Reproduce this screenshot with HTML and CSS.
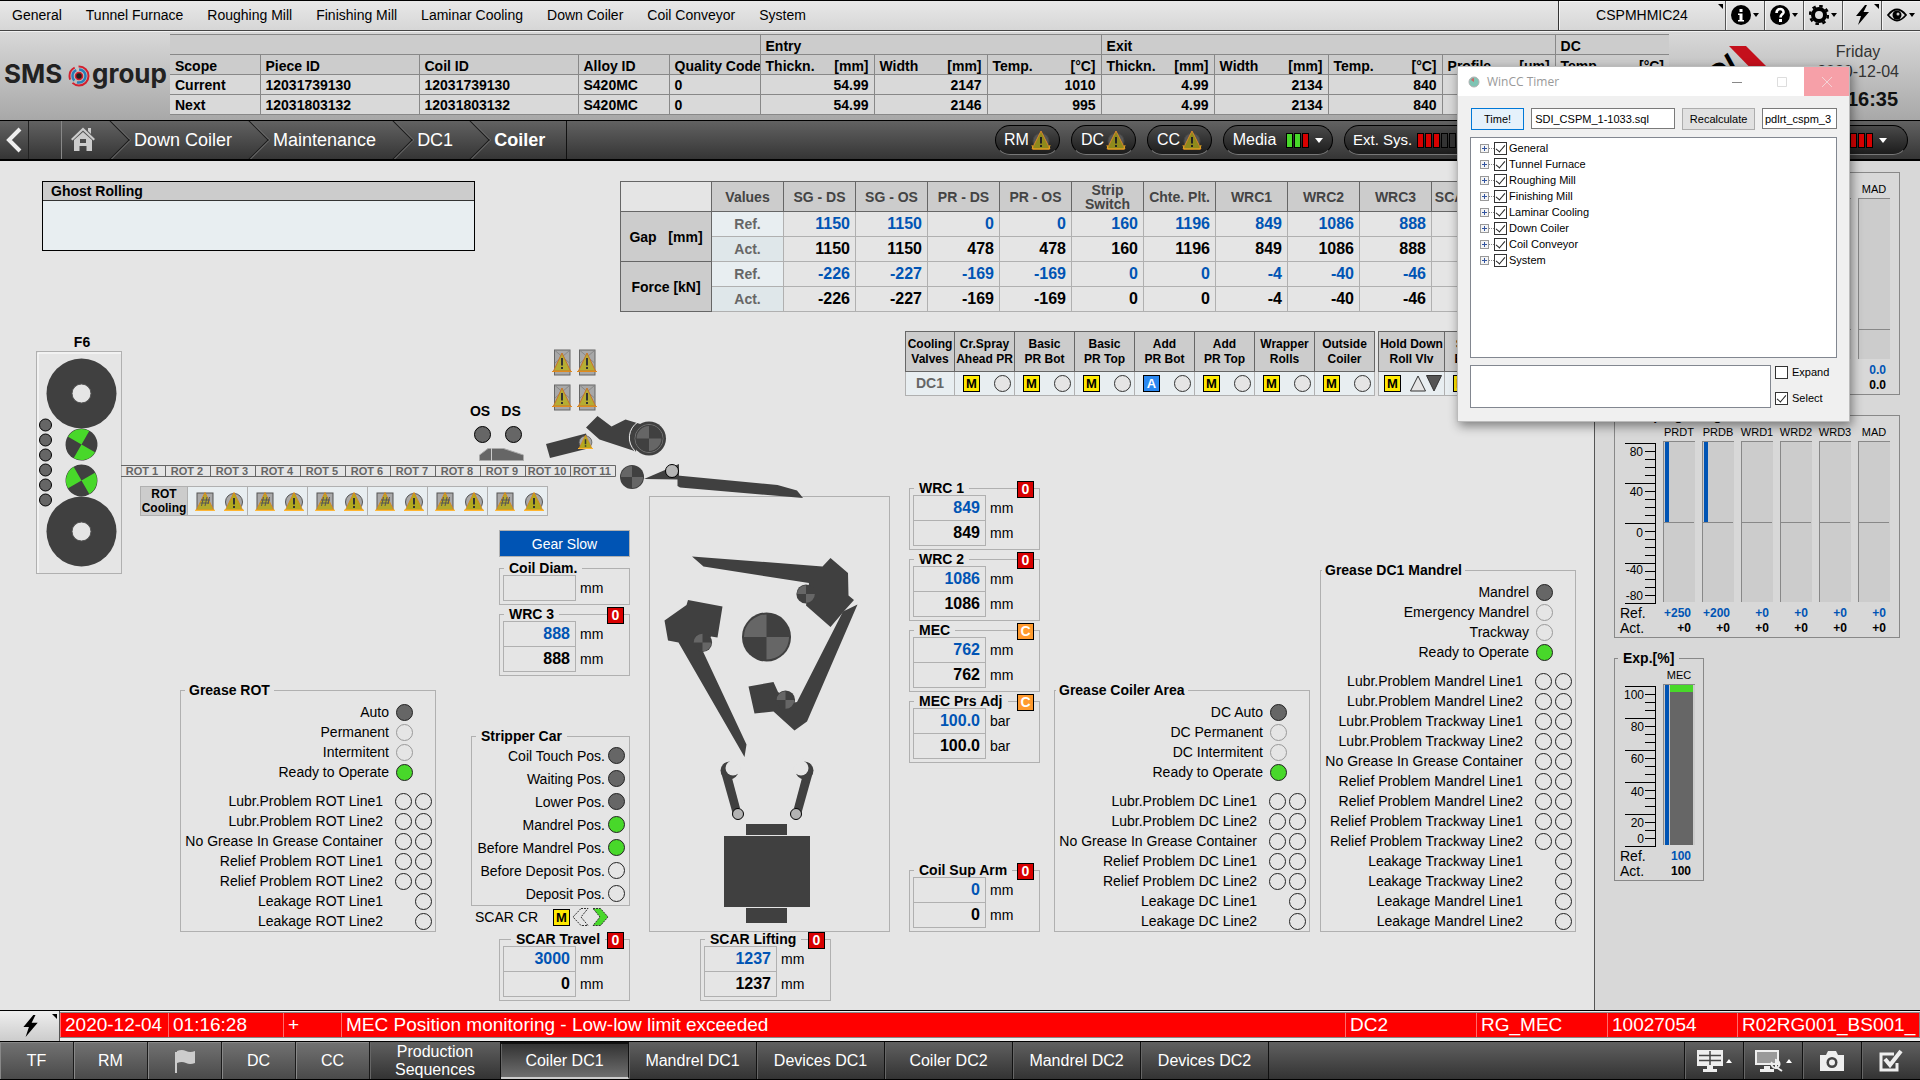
FILE: index.html
```html
<!DOCTYPE html>
<html lang="en">
<head>
<meta charset="utf-8">
<title>Coiler DC1</title>
<link rel="stylesheet" href="styles.css">
</head>
<body>
<svg class="defs" aria-hidden="true">
  <symbol id="roll" viewBox="-13 -13 26 26"><circle r="12.500" fill="#404040"/><path d="M0 0V-11.500A11.500 11.500 0 0 0 -11.500 0ZM0 0V11.500A11.500 11.500 0 0 0 11.500 0Z" fill="#666"/></symbol>
  <symbol id="roll-run" viewBox="-16.500 -16.500 33 33"><circle r="16" fill="#404040"/><path d="M0 0V-15.500A15.500 15.500 0 0 0 -15.500 0ZM0 0V15.500A15.500 15.500 0 0 0 15.500 0Z" fill="#48d82a"/></symbol>
  <symbol id="warn-circle" viewBox="0 0 20 20"><circle cx="10" cy="11" r="8.500" fill="#a8a8a8" stroke="#555"/><path d="M10 1.500L18.500 19H1.500Z" fill="#b2a91f" stroke="#d88a1e"/><path d="M0 19.300H20" stroke="#ffb52e" stroke-width="1.400"/><path d="M10 7V13.500M10 15V17" stroke="#333" stroke-width="2"/></symbol>
  <symbol id="warn-dark" viewBox="0 0 20 20"><circle cx="10" cy="11" r="8" fill="#555" stroke="#444"/><path d="M10 1L19 19H1Z" fill="#8f8a1c" stroke="#d8862a"/><path d="M1 15L2 19H18L19 15" fill="none" stroke="#e8a81e"/><path d="M10 7V13.500M10 15V17" stroke="#222" stroke-width="2"/></symbol>
  <symbol id="warn-square" viewBox="0 0 20 20"><rect x="2" y="2" width="16" height="16.500" fill="#aaa" stroke="#555"/><path d="M10 1.500L18.500 19H1.500Z" fill="#b2a91f" fill-opacity=".9" stroke="#d88a1e"/><path d="M0 19.300H20" stroke="#ffb52e" stroke-width="1.200"/><path d="M8.500 6L6.500 15M12 6L10 15M14.500 6L13 13M6 9H15M5.500 12H14" stroke="#555"/></symbol>
  <symbol id="crate" viewBox="0 0 20 27"><rect x="2.500" y="1" width="15.500" height="25" fill="#a8a8a8" stroke="#666"/><path d="M3 1.500L17.500 14M17.500 1.500L3 14" stroke="#888"/><path d="M10 4L18.500 22H1.500Z" fill="#b5ad33" stroke="#c8742a"/><path d="M0 22.500H20" stroke="#e08a1e"/><path d="M10 9V16.500M10 18V20" stroke="#333" stroke-width="2"/></symbol>
  <symbol id="bolt" viewBox="0 0 16 20"><path d="M11 0L2 11H7L4 20L15 7H9.500L13 0Z" fill="#000"/></symbol>
</svg>

<nav class="menubar">
  <ul class="menu">
    <li><a href="#general">General</a></li>
    <li><a href="#furnace">Tunnel Furnace</a></li>
    <li><a href="#roughing">Roughing Mill</a></li>
    <li><a href="#finishing">Finishing Mill</a></li>
    <li><a href="#laminar">Laminar Cooling</a></li>
    <li><a href="#coiler">Down Coiler</a></li>
    <li><a href="#conveyor">Coil Conveyor</a></li>
    <li><a href="#system">System</a></li>
  </ul>
  <button class="station corner">CSPMHMIC24</button>
  <button class="tool caret" aria-label="Info"><svg width="20" height="20"><circle cx="10" cy="10" r="10"/><path d="M7 8.500H11.500V15H13V16.500H7V15H8.500V10H7ZM8.500 4H11.500V7H8.500Z" fill="#fff"/></svg></button>
  <button class="tool caret" aria-label="Help"><svg width="20" height="20"><circle cx="10" cy="10" r="10"/><path d="M6.500 8C6.500 2.500 14 3 13.500 7.500C13 9.500 10.500 9.500 10.500 12.500" fill="none" stroke="#fff" stroke-width="2.600"/><path d="M9 14H12V17H9Z" fill="#fff"/></svg></button>
  <button class="tool caret" aria-label="Settings"><svg width="20" height="20"><circle cx="10" cy="10" r="6" fill="none" stroke="#000" stroke-width="4"/><circle cx="10" cy="10" r="9" fill="none" stroke="#000" stroke-width="2.500" stroke-dasharray="3.500 3.560"/></svg></button>
  <button class="tool corner" aria-label="Alarms"><svg width="16" height="20"><use href="#bolt"/></svg></button>
  <button class="tool caret" aria-label="View"><svg width="20" height="16"><path d="M1 8Q10 -3 19 8Q10 19 1 8Z" fill="none" stroke="#000" stroke-width="1.800"/><circle cx="10" cy="8" r="4.500"/><circle cx="11" cy="7" r="1.500" fill="#ccc"/></svg></button>
</nav>

<header class="header">
  <svg class="logo" viewBox="0 0 170 89" role="img" aria-label="SMS group">
    <text x="4" y="51" class="logo-text">SMS</text>
    <circle cx="79" cy="44" r="9.500" fill="none" stroke="#d3202f" stroke-width="2" stroke-dasharray="22 4 14 4"/>
    <circle cx="79" cy="44" r="6.500" fill="none" stroke="#2a7fb8" stroke-width="2.500" stroke-dasharray="12 3"/>
    <circle cx="79" cy="44" r="3.500" fill="#222" stroke="#d3202f" stroke-width="1.500"/>
    <text x="92" y="51" class="logo-text">group</text>
  </svg>
  <table class="coil-table">
    <colgroup><col class="w90"><col class="w159"><col class="w159"><col class="w91"><col class="w91"><col class="w114"><col class="w113"><col class="w114"><col class="w113"><col class="w114"><col class="w114"><col class="w113"><col class="w114"></colgroup>
    <thead>
      <tr class="groups"><th colspan="5"></th><th colspan="3">Entry</th><th colspan="4">Exit</th><th>DC</th></tr>
      <tr><th>Scope</th><th>Piece ID</th><th>Coil ID</th><th>Alloy ID</th><th>Quality Code</th>
        <th><span>Thickn.</span><i>[mm]</i></th><th><span>Width</span><i>[mm]</i></th><th><span>Temp.</span><i>[°C]</i></th>
        <th><span>Thickn.</span><i>[mm]</i></th><th><span>Width</span><i>[mm]</i></th><th><span>Temp.</span><i>[°C]</i></th><th><span>Profile</span><i>[um]</i></th><th><span>Temp.</span><i>[°C]</i></th></tr>
    </thead>
    <tbody>
      <tr><th>Current</th><td>12031739130</td><td>12031739130</td><td>S420MC</td><td>0</td><td class="num">54.99</td><td class="num">2147</td><td class="num">1010</td><td class="num">4.99</td><td class="num">2134</td><td class="num">840</td><td></td><td></td></tr>
      <tr><th>Next</th><td>12031803132</td><td>12031803132</td><td>S420MC</td><td>0</td><td class="num">54.99</td><td class="num">2146</td><td class="num">995</td><td class="num">4.99</td><td class="num">2134</td><td class="num">840</td><td></td><td></td></tr>
    </tbody>
  </table>
  <svg class="plant-logo" viewBox="0 0 110 70" role="img" aria-label="SDI">
    <path d="M51 14H68L106 52H88Z" fill="#c4101c"/>
    <text transform="translate(24 69) rotate(-40)" class="plant-text">SDI</text>
  </svg>
  <div class="clock"><span>Friday</span><span>2020-12-04</span><time>01:16:35</time></div>
</header>

<nav class="navbar">
  <button class="back" aria-label="Back"><svg width="20" height="26"><path d="M16 2L5 13L16 24" fill="none" stroke="#eee" stroke-width="4"/></svg></button>
  <ol class="crumbs">
    <li class="home"><a href="#home" aria-label="Home"><svg width="26" height="26" viewBox="0 0 26 26"><path d="M1 13L13 1.500L25 13L23.500 14.500L13 4.500L2.500 14.500Z" fill="#ccc"/><path d="M18 2H21V8L18 5Z" fill="#ccc"/><path d="M4 14L13 6L22 14V25H16.500V20H9.500V25H4ZM10 13V17H16V13Z" fill="#ccc" fill-rule="evenodd"/></svg></a></li>
    <li><a href="#down-coiler">Down Coiler</a></li>
    <li><a href="#maintenance">Maintenance</a></li>
    <li><a href="#dc1">DC1</a></li>
    <li class="current"><a href="#coiler-page">Coiler</a></li>
  </ol>
  <div class="pills">
    <button class="pill">RM<svg width="20" height="20"><use href="#warn-dark"/></svg></button>
    <button class="pill">DC<svg width="20" height="20"><use href="#warn-dark"/></svg></button>
    <button class="pill">CC<svg width="20" height="20"><use href="#warn-dark"/></svg></button>
    <button class="pill media">Media<span class="bars"><b class="on"></b><b class="on"></b><b class="fail"></b></span><span class="drop"></span></button>
    <button class="pill ext">Ext. Sys.<span class="bars"><b class="fail"></b><b class="fail"></b><b class="fail"></b><b></b><b></b><b></b><b></b><b></b></span></button>
    <button class="pill last">Safety<span class="bars"><b class="fail"></b><b class="fail"></b><b class="fail"></b></span><span class="drop"></span></button>
  </div>
</nav>

<main class="screen">
  <section class="plant">
    <svg class="mimic" viewBox="0 161 1594 849" width="1594" height="849">
      <text x="82" y="347" class="tag">F6</text>
      <rect x="36.500" y="351.500" width="85" height="222" fill="none" stroke="#b0b0b0"/>
      <path d="M38 573V353H121" fill="none" stroke="#fff"/>
      <g fill="#404040"><circle cx="81.500" cy="393.500" r="35"/><circle cx="81.500" cy="531.500" r="35"/></g>
      <g fill="#e5e5e5" stroke="#555"><circle cx="81.500" cy="393.500" r="9.500"/><circle cx="81.500" cy="531.500" r="9.500"/></g>
      <g transform="rotate(30 81.500 444.500)"><use href="#roll-run" x="65" y="428" width="33" height="33"/></g>
      <g transform="rotate(-30 81.500 480.500)"><use href="#roll-run" x="65" y="464" width="33" height="33"/></g>
      <g class="stud"><circle cx="45.500" cy="425" r="6"/><circle cx="45.500" cy="440" r="6"/><circle cx="45.500" cy="455" r="6"/><circle cx="45.500" cy="470" r="6"/><circle cx="45.500" cy="485" r="6"/><circle cx="45.500" cy="500" r="6"/></g>
      <path d="M121 465.500H615.500V476.500H121M165.500 465V477M210.500 465V477M255.500 465V477M300.500 465V477M345.500 465V477M390.500 465V477M435.500 465V477M480.500 465V477M525.500 465V477M570.500 465V477" fill="none" stroke="#666"/>
      <g class="rot"><text x="142" y="475">ROT 1</text><text x="187" y="475">ROT 2</text><text x="232" y="475">ROT 3</text><text x="277" y="475">ROT 4</text><text x="322" y="475">ROT 5</text><text x="367" y="475">ROT 6</text><text x="412" y="475">ROT 7</text><text x="457" y="475">ROT 8</text><text x="502" y="475">ROT 9</text><text x="547" y="475">ROT 10</text><text x="592" y="475">ROT 11</text></g>
      <text x="480" y="416" class="tag">OS</text><text x="511" y="416" class="tag">DS</text>
      <g class="stud"><circle cx="482.500" cy="434.500" r="8"/><circle cx="513.500" cy="434.500" r="8"/></g>
      <path d="M479.500 460.500V455L488 448.500H503.500L523.500 455V460.500Z" fill="#666" stroke="#aaa"/><path d="M491.500 448V461" stroke="#ccc"/>
      <use href="#crate" x="552" y="349" width="20" height="27"/><use href="#crate" x="577" y="349" width="20" height="27"/>
      <use href="#crate" x="552" y="384" width="20" height="27"/><use href="#crate" x="577" y="384" width="20" height="27"/>
      <g fill="#404040">
        <path d="M546 444L586 433.500L590 448L550 458Z"/>
        <path d="M597.500 416L611.500 426.500L625.500 419.500L642 424.500L636 451.500L599.500 439.500L586 427.500Z"/>
        <path d="M644 479L679 464V479.500Z"/>
        <path d="M677.500 475.500L777.500 485L797 490.500L803 498L680 487.500L677.500 486Z"/>
      </g>
      <use href="#warn-circle" x="578" y="434" width="15" height="15"/>
      <path d="M638 422A18.500 18.500 0 0 0 635 451" fill="none" stroke="#eee"/>
      <circle cx="649" cy="438.500" r="17" fill="#404040"/><circle cx="649" cy="438.500" r="14" fill="none" stroke="#777"/>
      <use href="#roll" x="635" y="424.500" width="28" height="28"/>
      <use href="#roll" x="619.500" y="464.500" width="25" height="25"/>
      <circle cx="672" cy="471" r="6.500" fill="#b5b5b5" stroke="#000"/>
    </svg>

    <div class="top-row">
      <section class="ghost"><h2>Ghost Rolling</h2></section>
      <table class="values">
        <colgroup><col class="w91"><col class="w72" span="11"></colgroup>
        <thead><tr><td></td><th>Values</th><th>SG - DS</th><th>SG - OS</th><th>PR - DS</th><th>PR - OS</th><th>Strip Switch</th><th>Chte. Plt.</th><th>WRC1</th><th>WRC2</th><th>WRC3</th><th>SCAR Lift</th></tr></thead>
        <tbody>
          <tr class="ref"><th rowspan="2" class="qty">Gap &nbsp; [mm]</th><th>Ref.</th><td>1150</td><td>1150</td><td>0</td><td>0</td><td>160</td><td>1196</td><td>849</td><td>1086</td><td>888</td><td></td></tr>
          <tr><th>Act.</th><td>1150</td><td>1150</td><td>478</td><td>478</td><td>160</td><td>1196</td><td>849</td><td>1086</td><td>888</td><td></td></tr>
          <tr class="ref"><th rowspan="2" class="qty">Force [kN]</th><th>Ref.</th><td>-226</td><td>-227</td><td>-169</td><td>-169</td><td>0</td><td>0</td><td>-4</td><td>-40</td><td>-46</td><td></td></tr>
          <tr><th>Act.</th><td>-226</td><td>-227</td><td>-169</td><td>-169</td><td>0</td><td>0</td><td>-4</td><td>-40</td><td>-46</td><td></td></tr>
        </tbody>
      </table>
    </div>

    <div class="valves-row">
      <table class="valves">
        <colgroup><col class="w49"><col class="w60" span="7"></colgroup>
        <thead><tr><th>Cooling Valves</th><th>Cr.Spray Ahead&nbsp;PR</th><th>Basic<br>PR Bot</th><th>Basic<br>PR Top</th><th>Add<br>PR Bot</th><th>Add<br>PR Top</th><th>Wrapper Rolls</th><th>Outside Coiler</th></tr></thead>
        <tbody><tr><th>DC1</th>
          <td><div><b class="mode">M</b><i class="ring"></i></div></td><td><div><b class="mode">M</b><i class="ring"></i></div></td><td><div><b class="mode">M</b><i class="ring"></i></div></td><td><div><b class="mode auto">A</b><i class="ring"></i></div></td><td><div><b class="mode">M</b><i class="ring"></i></div></td><td><div><b class="mode">M</b><i class="ring"></i></div></td><td><div><b class="mode">M</b><i class="ring"></i></div></td></tr></tbody>
      </table>
      <table class="valves">
        <colgroup><col class="w66"><col class="w50"></colgroup>
        <thead><tr><th>Hold&nbsp;Down Roll Vlv</th><th>Strip<br>Bend</th></tr></thead>
        <tbody><tr><td><div class="tight"><b class="mode">M</b><svg width="32" height="17"><path d="M8 1L15.500 16H.500Z" fill="#e5e5e5" stroke="#333"/><path d="M16.500 .500H31.500L24 16Z" fill="#555" stroke="#333"/></svg></div></td><td><div><b class="mode">M</b></div></td></tr></tbody>
      </table>
    </div>

    <div class="work">
      <table class="rot-cooling">
        <colgroup><col class="w47"><col class="w60" span="6"></colgroup>
        <tbody><tr><th>ROT Cooling</th>
          <td><div><svg><use href="#warn-square"/></svg><svg><use href="#warn-circle"/></svg></div></td><td><div><svg><use href="#warn-square"/></svg><svg><use href="#warn-circle"/></svg></div></td><td><div><svg><use href="#warn-square"/></svg><svg><use href="#warn-circle"/></svg></div></td><td><div><svg><use href="#warn-square"/></svg><svg><use href="#warn-circle"/></svg></div></td><td><div><svg><use href="#warn-square"/></svg><svg><use href="#warn-circle"/></svg></div></td><td><div><svg><use href="#warn-square"/></svg><svg><use href="#warn-circle"/></svg></div></td></tr></tbody>
      </table>

      <fieldset class="grease c1">
        <legend>Grease ROT</legend>
        <ul class="states"><li>Auto<i class="lamp dark"></i></li><li>Permanent<i class="lamp off"></i></li><li>Intermitent<i class="lamp off"></i></li><li>Ready to Operate<i class="lamp green"></i></li></ul>
        <ul class="faults"><li>Lubr.Problem ROT Line1<i class="lamp"></i><i class="lamp"></i></li><li>Lubr.Problem ROT Line2<i class="lamp"></i><i class="lamp"></i></li><li>No Grease In Grease Container<i class="lamp"></i><i class="lamp"></i></li><li>Relief Problem ROT Line1<i class="lamp"></i><i class="lamp"></i></li><li>Relief Problem ROT Line2<i class="lamp"></i><i class="lamp"></i></li><li>Leakage ROT Line1<i class="lamp only"></i></li><li>Leakage ROT Line2<i class="lamp only"></i></li></ul>
      </fieldset>

      <div class="controls">
        <button class="gear">Gear Slow</button>
        <fieldset class="gauge"><legend>Coil Diam.</legend><p><output></output>mm</p></fieldset>
        <fieldset class="gauge"><legend>WRC 3</legend><b class="flag">0</b><p class="ref"><output>888</output>mm</p><p><output>888</output>mm</p></fieldset>
        <fieldset class="stripper"><legend>Stripper Car</legend>
          <ul><li>Coil Touch Pos.<i class="lamp dark"></i></li><li>Waiting Pos.<i class="lamp dark"></i></li><li>Lower Pos.<i class="lamp dark"></i></li><li>Mandrel Pos.<i class="lamp green"></i></li><li>Before Mandrel Pos.<i class="lamp green"></i></li><li>Before Deposit Pos.<i class="lamp"></i></li><li>Deposit Pos.<i class="lamp"></i></li></ul>
        </fieldset>
        <div class="scar-cr">SCAR CR<b class="mode">M</b><svg width="37" height="18"><path d="M9 .500H16L9 9L16 17.500H9L1 9Z" fill="#e5e5e5" stroke="#333" stroke-dasharray="2 1"/><path d="M21 .500H28.500L36 9L28.500 17.500H21L28 9Z" fill="#48d82a" stroke="#333" stroke-dasharray="2 1"/></svg></div>
      </div>
      <fieldset class="gauge c2 travel"><legend>SCAR Travel</legend><b class="flag">0</b><p class="ref"><output>3000</output>mm</p><p><output>0</output>mm</p></fieldset>

      <div class="coiler">
        <svg viewBox="649 496 241 436" width="241" height="436">
          <g fill="#404040">
            <path d="M692 556.500L822.500 566.500L830.500 558L848 573L848.500 595.500L854 600L845 610L830.500 627L806 605.500L809 583L703.500 566.500Z"/>
            <path d="M688 600L722.500 606.500L717.500 637.500L711 636.500L703 651.500L746.500 744.500L744.500 757L678.500 642.500L668 640.500L664.500 620.500L686.500 605Z"/>
            <path d="M857.500 604.500L807 721.500L794.500 730.500L773.500 711.500L754.500 713.500L748.500 686.500L773.500 682L778 692L794.500 702.500L797 702L843 611.500Z"/>
            <path d="M721 768L732 778L740 808L732.500 813L721 772Z"/><circle cx="729.500" cy="770.500" r="9"/>
            <path d="M813 768L802 778L794 808L801.500 813L813 772Z"/><circle cx="804.500" cy="770.500" r="9"/>
            <rect x="746" y="824" width="41" height="11"/><rect x="724" y="836" width="86" height="71"/><rect x="746" y="908" width="41" height="15"/>
          </g>
          <g fill="#e5e5e5"><circle cx="733" cy="768" r="7.500"/><path d="M729 758H742V768Z"/><circle cx="801" cy="768" r="7.500"/><path d="M805 758H792V768Z"/></g>
          <g fill="#b3b3b3" stroke="#000"><circle cx="738" cy="814" r="5.500"/><circle cx="796" cy="814" r="5.500"/></g>
          <use href="#roll" x="741" y="611.500" width="51" height="51"/>
          <use href="#roll" x="796" y="584" width="20" height="20"/>
          <use href="#roll" x="692.500" y="632.500" width="20" height="20"/>
          <use href="#roll" x="775.500" y="690" width="20" height="20"/>
        </svg>
      </div>
      <fieldset class="gauge c3"><legend>SCAR Lifting</legend><b class="flag">0</b><p class="ref"><output>1237</output>mm</p><p><output>1237</output>mm</p></fieldset>

      <div class="gauges">
        <fieldset class="gauge"><legend>WRC 1</legend><b class="flag">0</b><p class="ref"><output>849</output>mm</p><p><output>849</output>mm</p></fieldset>
        <fieldset class="gauge"><legend>WRC 2</legend><b class="flag">0</b><p class="ref"><output>1086</output>mm</p><p><output>1086</output>mm</p></fieldset>
        <fieldset class="gauge"><legend>MEC</legend><b class="flag cas">C</b><p class="ref"><output>762</output>mm</p><p><output>762</output>mm</p></fieldset>
        <fieldset class="gauge"><legend>MEC Prs Adj</legend><b class="flag cas">C</b><p class="ref"><output>100.0</output>bar</p><p><output>100.0</output>bar</p></fieldset>
        <fieldset class="gauge"><legend>Coil Sup Arm</legend><b class="flag">0</b><p class="ref"><output>0</output>mm</p><p><output>0</output>mm</p></fieldset>
      </div>

      <fieldset class="grease c5">
        <legend>Grease Coiler Area</legend>
        <ul class="states"><li>DC Auto<i class="lamp dark"></i></li><li>DC Permanent<i class="lamp off"></i></li><li>DC Intermitent<i class="lamp off"></i></li><li>Ready to Operate<i class="lamp green"></i></li></ul>
        <ul class="faults"><li>Lubr.Problem DC Line1<i class="lamp"></i><i class="lamp"></i></li><li>Lubr.Problem DC Line2<i class="lamp"></i><i class="lamp"></i></li><li>No Grease In Grease Container<i class="lamp"></i><i class="lamp"></i></li><li>Relief Problem DC Line1<i class="lamp"></i><i class="lamp"></i></li><li>Relief Problem DC Line2<i class="lamp"></i><i class="lamp"></i></li><li>Leakage DC Line1<i class="lamp only"></i></li><li>Leakage DC Line2<i class="lamp only"></i></li></ul>
      </fieldset>

      <fieldset class="grease c6">
        <legend>Grease DC1 Mandrel</legend>
        <ul class="states"><li>Mandrel<i class="lamp dark"></i></li><li>Emergency Mandrel<i class="lamp off"></i></li><li>Trackway<i class="lamp off"></i></li><li>Ready to Operate<i class="lamp green"></i></li></ul>
        <ul class="faults"><li>Lubr.Problem Mandrel Line1<i class="lamp"></i><i class="lamp"></i></li><li>Lubr.Problem Mandrel Line2<i class="lamp"></i><i class="lamp"></i></li><li>Lubr.Problem Trackway Line1<i class="lamp"></i><i class="lamp"></i></li><li>Lubr.Problem Trackway Line2<i class="lamp"></i><i class="lamp"></i></li><li>No Grease In Grease Container<i class="lamp"></i><i class="lamp"></i></li><li>Relief Problem Mandrel Line1<i class="lamp"></i><i class="lamp"></i></li><li>Relief Problem Mandrel Line2<i class="lamp"></i><i class="lamp"></i></li><li>Relief Problem Trackway Line1<i class="lamp"></i><i class="lamp"></i></li><li>Relief Problem Trackway Line2<i class="lamp"></i><i class="lamp"></i></li><li>Leakage Trackway Line1<i class="lamp only"></i></li><li>Leakage Trackway Line2<i class="lamp only"></i></li><li>Leakage Mandrel Line1<i class="lamp only"></i></li><li>Leakage Mandrel Line2<i class="lamp only"></i></li></ul>
      </fieldset>
    </div>
  </section>

  <aside class="side">
    <fieldset class="chart"><legend>Damping Gap</legend>
      <div class="axis"><svg width="38" height="163"><path d="M37.500 2V163" stroke="#000"/><path d="M32 2V163" stroke="#000" stroke-width="10" stroke-dasharray="1 7"/></svg></div>
      <div class="bar-col"><h3></h3><div class="bar zero-low"></div></div>
      <div class="bar-col"><h3></h3><div class="bar zero-low"></div></div>
      <div class="bar-col"><h3></h3><div class="bar zero-low"></div></div>
      <div class="bar-col"><h3></h3><div class="bar zero-low"></div></div>
      <div class="bar-col"><h3></h3><div class="bar zero-low"></div></div>
      <div class="bar-col"><h3>MAD</h3><div class="bar zero-low"></div><b>0.0</b><b>0.0</b></div>
    </fieldset>
    <fieldset class="chart"><legend>Damping Range</legend>
      <div class="axis"><svg width="38" height="163"><path d="M37.500 2V163" stroke="#000"/><path d="M32 2V163" stroke="#000" stroke-width="10" stroke-dasharray="1 7"/><path d="M22 2V163" stroke="#000" stroke-width="30" stroke-dasharray="1 39"/><g class="scale"><text x="25" y="15">80</text><text x="25" y="55">40</text><text x="25" y="96">0</text><text x="25" y="133">-40</text><text x="25" y="159">-80</text></g></svg><span>Ref.</span><span>Act.</span></div>
      <div class="bar-col"><h3>PRDT</h3><div class="bar zero"><i class="setpoint" style="height:80px"></i></div><b>+250</b><b>+0</b></div>
      <div class="bar-col"><h3>PRDB</h3><div class="bar zero"><i class="setpoint" style="height:80px"></i></div><b>+200</b><b>+0</b></div>
      <div class="bar-col"><h3>WRD1</h3><div class="bar zero"></div><b>+0</b><b>+0</b></div>
      <div class="bar-col"><h3>WRD2</h3><div class="bar zero"></div><b>+0</b><b>+0</b></div>
      <div class="bar-col"><h3>WRD3</h3><div class="bar zero"></div><b>+0</b><b>+0</b></div>
      <div class="bar-col"><h3>MAD</h3><div class="bar zero"></div><b>+0</b><b>+0</b></div>
    </fieldset>
    <fieldset class="chart narrow"><legend>Exp.[%]</legend>
      <div class="axis"><svg width="38" height="163"><path d="M37.500 2V163" stroke="#000"/><path d="M32 2V163" stroke="#000" stroke-width="10" stroke-dasharray="1 7"/><path d="M22 2V163" stroke="#000" stroke-width="30" stroke-dasharray="1 31"/><g class="scale"><text x="26" y="15">100</text><text x="26" y="47">80</text><text x="26" y="79">60</text><text x="26" y="112">40</text><text x="26" y="143">20</text><text x="26" y="159">0</text></g></svg><span>Ref.</span><span>Act.</span></div>
      <div class="bar-col"><h3>MEC</h3><div class="bar"><i class="setpoint" style="height:160px"></i><i class="fill" style="height:160px"></i></div><b>100</b><b>100</b></div>
    </fieldset>
  </aside>
</main>

<section class="alarm">
  <button class="ack corner" aria-label="Alarm list"><svg width="18" height="22" viewBox="0 0 16 20"><use href="#bolt"/></svg></button>
  <div class="alarm-line"><span>2020-12-04</span><span>01:16:28</span><span>+</span><span>MEC Position monitoring - Low-low limit exceeded</span><span>DC2</span><span>RG_MEC</span><span>10027054</span><span>R02RG001_BS001_</span></div>
</section>

<nav class="tabs">
  <div class="areas">
    <button>TF</button><button>RM</button>
    <button aria-label="Finishing mill"><svg width="22" height="26"><path d="M2 4V25" stroke="#ccc" stroke-width="2"/><path d="M3 3Q8 1 12 3T21 3V15Q16 17 12 15T3 15Z" fill="#ccc"/></svg></button>
    <button>DC</button><button>CC</button>
  </div>
  <div class="pages"><button>Production Sequences</button><button class="active">Coiler DC1</button><button>Mandrel DC1</button><button>Devices DC1</button><button>Coiler DC2</button><button>Mandrel DC2</button><button>Devices DC2</button></div>
  <div class="tools">
    <button class="caret-up" aria-label="Screens"><svg width="26" height="24"><path d="M0 1H26V17H0Z M10 17H16V20H20V23H6V20H10Z" fill="#eee"/><path d="M2 6.500H24M2 11.500H24M13 2V16" stroke="#444" stroke-width="1.500"/></svg></button>
    <button class="caret-up" aria-label="Display tools"><svg width="28" height="24"><path d="M0 1H24V16H0ZM9 17H15V20H19V23H5V20H9Z" fill="#eee"/><path d="M2 3H22V14H2Z" fill="#999"/><path d="M17 13A4 4 0 1 0 21 11V18L27 22" fill="none" stroke="#eee" stroke-width="2"/></svg></button>
    <button aria-label="Screenshot"><svg width="26" height="22"><path d="M1 5H7L9 1H17L19 5H25V21H1Z" fill="#eee"/><circle cx="13" cy="12.500" r="5.500" fill="#444"/><circle cx="13" cy="12.500" r="3" fill="#eee"/></svg></button>
    <button aria-label="Acknowledge"><svg width="26" height="24"><path d="M19 14V21H3V5H16" fill="none" stroke="#eee" stroke-width="3"/><path d="M7 10L12 16L23 2" fill="none" stroke="#eee" stroke-width="4"/></svg></button>
  </div>
</nav>

<div class="dialog" role="dialog" aria-label="WinCC Timer">
  <div class="titlebar">
    <svg width="12" height="12"><circle cx="6" cy="6" r="5" fill="#7fc4b4" stroke="#b0b0b0"/><path d="M6 6V2A4 4 0 0 0 3 4Z" fill="#c66"/></svg>
    <span>WinCC Timer</span>
    <button aria-label="Minimize"><svg width="12" height="12"><path d="M1 6.500H11" stroke="#888"/></svg></button>
    <button aria-label="Maximize"><svg width="12" height="12"><path d="M1.500 1.500H10.500V10.500H1.500Z" fill="none" stroke="#ddd"/></svg></button>
    <button class="close" aria-label="Close"><svg width="12" height="12"><path d="M1 1L11 11M11 1L1 11" stroke="#f3d3d6"/></svg></button>
  </div>
  <div class="dialog-body">
    <div class="dialog-top">
      <button class="time">Time!</button>
      <input type="text" value="SDI_CSPM_1-1033.sql" aria-label="Script">
      <button>Recalculate</button>
      <input type="text" class="short" value="pdlrt_cspm_3" aria-label="Database">
    </div>
    <div class="tree">
      <label><i></i><input type="checkbox" checked>General</label>
      <label><i></i><input type="checkbox" checked>Tunnel Furnace</label>
      <label><i></i><input type="checkbox" checked>Roughing Mill</label>
      <label><i></i><input type="checkbox" checked>Finishing Mill</label>
      <label><i></i><input type="checkbox" checked>Laminar Cooling</label>
      <label><i></i><input type="checkbox" checked>Down Coiler</label>
      <label><i></i><input type="checkbox" checked>Coil Conveyor</label>
      <label><i></i><input type="checkbox" checked>System</label>
    </div>
    <div class="dialog-bottom">
      <textarea aria-label="Messages"></textarea>
      <div class="options"><label><input type="checkbox">Expand</label><label><input type="checkbox" checked>Select</label></div>
    </div>
  </div>
</div>
</body>
</html>
```

FILE: styles.css
```css
* { box-sizing: border-box; margin: 0; padding: 0; }
body {
  position: relative;
  min-width: 1920px;
  min-height: 100vh;
  display: flex;
  flex-direction: column;
  background: #e5e5e5;
  color: #000;
  font: 14px/16px "Liberation Sans", Arial, sans-serif;
}
ul, ol { list-style: none; }
a { color: inherit; text-decoration: none; }
i { font-style: normal; }
button { font: inherit; color: inherit; background: none; border: 0; display: flex; align-items: center; justify-content: center; }
fieldset { min-width: 0; }
table { border-collapse: collapse; table-layout: fixed; }
.defs { position: absolute; width: 0; height: 0; }

.w47 { width: 47px; } .w49 { width: 49px; } .w50 { width: 50px; } .w60 { width: 60px; }
.w66 { width: 66px; } .w72 { width: 72px; } .w90 { width: 90px; } .w91 { width: 91px; }
.w113 { width: 113px; } .w114 { width: 114px; } .w159 { width: 159px; }

/* menu bar */
.menubar { display: flex; height: 31px; border-top: 1px solid #000; border-bottom: 1px solid #444; background: linear-gradient(#e8e8e8, #d6d6d6); }
.menu { flex: 1; display: flex; align-items: center; gap: 24px; padding: 0 0 2px 12px; }
.station { width: 167px; border-left: 1px solid #333; }
.tool { width: 39px; border-left: 1px solid #555; gap: 2px; }
.menubar button { position: relative; padding-bottom: 2px; box-shadow: inset 1px 1px #f4f4f4; }
.caret::after { content: ""; border: 3px solid transparent; border-top: 4px solid #000; border-bottom: 0; }
.corner { position: relative; }
.corner::after { content: ""; position: absolute; top: 3px; right: 2px; border-left: 5px solid transparent; border-top: 5px solid #000; }

/* header */
.header { display: flex; height: 89px; background: linear-gradient(#d8d8d8, #a8a8a8); border-top: 1px solid #f0f0f0; }
.logo { width: 170px; height: 89px; flex: none; }
.logo-text { font: 700 26px Inter, sans-serif; fill: #222; }
.coil-table { width: 1499px; height: 81px; margin-top: 2px; flex: none; font-weight: 700; }
.coil-table th, .coil-table td { height: 20px; padding: 0 5px; border: 1px solid #888; background: #d9d9d9; text-align: left; white-space: nowrap; overflow: hidden; }
.coil-table tr > :first-child { border-left: 0; }
.coil-table tr > :last-child { border-right: 0; }
.coil-table thead th { background: #ccc; vertical-align: bottom; line-height: 15px; }
.coil-table thead i { float: right; }
.coil-table .num { text-align: right; }
.plant-logo { width: 110px; height: 70px; margin-left: 9px; }
.plant-text { font: italic 700 30px "Liberation Sans", sans-serif; fill: #000; }
.clock { margin: 10px 21px 0 auto; display: flex; flex-direction: column; align-items: center; font-size: 16px; line-height: 20px; color: #333; }
.clock time { font-size: 20px; font-weight: 700; line-height: 34px; color: #111; }

/* breadcrumb bar */
.navbar { display: flex; height: 41px; border-top: 1px solid #000; border-bottom: 2px solid #000; background: linear-gradient(#626262, #353535); color: #fff; }
.back { width: 29px; border-right: 1px solid #222; }
.crumbs { display: flex; margin-left: 32px; border-left: 1px solid #888; border-right: 1px solid #111; font-size: 18px; overflow: hidden; }
.crumbs li { display: flex; align-items: center; padding: 0 21px 0 20px; position: relative; }
.crumbs li:not(.current)::after { content: ""; position: absolute; right: -10px; top: 5px; width: 27px; height: 27px; border: solid #1a1a1a; border-width: 1px 1px 0 0; transform: rotate(45deg); box-shadow: 1px -1px #6a6a6a; clip-path: inset(-2px); }
.crumbs .home { padding: 0 18px 0 8px; }
.crumbs .current { font-weight: 700; }
.pills { flex: 0 0 925px; margin-left: auto; padding-right: 12px; display: flex; align-items: center; gap: 11px; }
.pill { height: 30px; width: 65px; border: 1px solid #000; border-bottom-color: #777; border-radius: 15px; background: linear-gradient(#4a4a4a, #1c1c1c); color: #fff; font-size: 16px; gap: 2px; }
.media { width: 110px; gap: 10px; }
.media .drop { margin-left: -4px; }
.ext { width: 160px; gap: 5px; padding-left: 8px; font-size: 15px; justify-content: flex-start; }
.last { width: 130px; margin-left: auto; gap: 6px; }
.bars { display: flex; gap: 1px; }
.bars b { width: 7px; height: 15px; border: 1px solid #000; background: #333; }
.bars .on { background: #48d82a; }
.bars .fail { background: #d80000; }
.drop { border: 4px solid transparent; border-top: 5px solid #fff; border-bottom: 0; }

/* main screen */
.screen { flex: 1; display: flex; }
.plant { flex: 1; position: relative; }
.mimic { position: absolute; left: 0; top: 0; z-index: 1; pointer-events: none; }
.tag { font: 700 14px "Liberation Sans", sans-serif; text-anchor: middle; }
.rot { font: 700 11px "Liberation Sans", sans-serif; text-anchor: middle; fill: #666; }
.stud { fill: #666; stroke: #000; }

.top-row { display: flex; gap: 145px; height: 151px; padding: 20px 0 0 42px; align-items: flex-start; }
.ghost { width: 433px; height: 70px; border: 1px solid #000; background: #e8eef1; }
.ghost h2 { height: 19px; padding-left: 8px; font-size: 14px; line-height: 19px; background: #ccc; border-bottom: 1px solid #333; }
.values { width: 883px; height: 131px; border: 1px solid #666; font-weight: 700; line-height: 14px; }
.values th, .values td { height: 25px; border: 1px solid #b0b0b0; }
.values thead > tr > * { height: 30px; border-color: #666; }
.values thead th { background: #ccc; color: #444; }
.values td { padding-right: 5px; text-align: right; font-size: 16px; }
.values tbody th { background: #dfe7ea; color: #666; }
.values .ref th { background: #e8eef1; }
.values tbody .qty { background: #ccc; color: #000; border-color: #666; }
.ref td, .ref output { color: #0054b4; }

.valves-row { display: flex; gap: 3px; height: 65px; margin: 19px 0 0 905px; }
.valves { font-size: 12px; line-height: 15px; height: 65px; width: 470px; border: 1px solid #666; border-bottom-color: #b0b0b0; }
.valves + .valves { width: 117px; }
.valves thead th { height: 40px; background: #ccc; border: 1px solid #666; }
.valves tbody th { color: #666; font-size: 14px; }
.valves tbody > tr > * { height: 24px; background: #e8eef1; border: 1px solid #b0b0b0; border-top-color: #666; }
.valves td div { display: flex; justify-content: space-between; padding: 0 3px 0 8px; }
.valves td .tight { padding: 0 2px 0 5px; }
.mode { width: 17px; height: 17px; border: 1px solid #000; background: #ffe900; font-size: 13px; line-height: 15px; text-align: center; }
.mode.auto { background: #2a88f0; color: #fff; }
.ring { width: 17px; height: 17px; border: 1px solid #333; border-radius: 50%; background: #e5e5e5; }

.work { display: grid; grid-template-columns: 296px 194px 260px 150px 270px 266px; grid-template-rows: 35px 416px 69px; padding: 85px 0 9px 140px; justify-items: end; align-items: end; }
.rot-cooling { grid-area: 1 / 1 / 2 / 3; justify-self: start; width: 408px; height: 30px; font-size: 12px; line-height: 14px; }
.rot-cooling th { background: #ccc; border: 1px solid #b0b0b0; }
.rot-cooling td { background: #e8eef1; border: 1px solid #b0b0b0; }
.rot-cooling div { display: flex; justify-content: space-between; padding: 0 3px 0 7px; }
.rot-cooling svg { width: 20px; height: 20px; }

fieldset { border: 1px solid #b0b0b0; }
legend { padding: 0 5px; font-weight: 700; line-height: 14px; white-space: nowrap; }
.lamp { width: 17px; height: 17px; border: 1px solid #222; border-radius: 50%; }
.lamp.dark { background: #666; }
.lamp.off { border-color: #999; }
.lamp.green { background: #48d82a; }

.grease { width: 256px; padding: 5px 3px 0 0; }
.grease legend { margin-left: 1px; padding: 0 3px; }
.grease.c1 { grid-area: 2 / 1; }
.grease.c1 legend { margin-left: 4px; padding: 0 4px; }
.grease.c5 { grid-area: 2 / 5; }
.grease.c6 { grid-area: 2 / 6; }
.grease li { display: grid; height: 20px; align-items: center; text-align: right; white-space: nowrap; line-height: 18px; }
.states li { grid-template-columns: 1fr 17px; gap: 7px; padding-right: 19px; }
.faults { padding-top: 9px; }
.faults li { grid-template-columns: 1fr 26px 17px; gap: 3px; justify-items: end; }
.faults .lamp:nth-of-type(1):not(.only) { grid-column: 2; }
.faults .only { grid-column: 3; }

.controls { grid-area: 2 / 2; height: 416px; width: 159px; padding: 14px 0 6px; display: flex; flex-direction: column; align-items: flex-end; }
.gear { width: 131px; height: 27px; margin-bottom: 4px; background: #0054b4; border: 1px solid #b0b0b0; color: #fff; font-size: 14px; }
.gauge { position: relative; width: 131px; padding: 0 3px 3px; }
.controls .gauge { margin-bottom: 2px; }
.gauge legend { margin-left: 1px; }
.gauge p { display: flex; align-items: center; gap: 4px; height: 25px; }
.gauge p:last-child { height: 26px; }
.gauge output { width: 73px; height: 100%; padding-right: 5px; border: 1px solid #b0b0b0; border-bottom: 0; font-size: 16px; line-height: 24px; font-weight: 700; text-align: right; }
.gauge p:last-child output { border-bottom: 1px solid #b0b0b0; }
.flag { position: absolute; right: 5px; top: -14px; width: 17px; height: 17px; border: 1px solid #000; background: #d80000; color: #fff; line-height: 15px; text-align: center; }
.flag.cas { background: #ff9a2e; }
.gauge.c2 { grid-area: 3 / 2; }
.gauge.c3 { grid-area: 3 / 3; margin-right: 59px; }
.travel legend { margin-left: 8px; }
.stripper { width: 159px; margin-top: auto; padding: 1px 4px 0 0; }
.stripper legend { margin-left: 4px; }
.stripper li { display: flex; justify-content: flex-end; align-items: center; gap: 3px; height: 23px; line-height: 18px; white-space: nowrap; }
.scar-cr { align-self: stretch; display: flex; align-items: center; gap: 2px; margin-top: 2px; padding: 0 21px 0 4px; }
.scar-cr .mode { margin-left: auto; }
.coiler { grid-area: 1 / 3 / 3 / 4; width: 241px; height: 436px; border: 1px solid #b0b0b0; }
.coiler svg { display: block; margin: -1px; }
.gauges { grid-area: 1 / 4 / 3 / 5; height: 451px; display: flex; flex-direction: column; gap: 2px; }
.gauges .gauge:last-child { margin-top: auto; }

/* side charts */
.side { width: 326px; flex: none; padding: 4px 20px 0 19px; background: #d8d8d8; border-left: 1px solid #555; }
.chart { display: flex; gap: 7px; width: 286px; height: 230px; margin-bottom: 13px; padding: 4px 3px 0; border-color: #888; }
.chart.narrow { width: 90px; }
.axis { width: 38px; padding-top: 15px; display: flex; flex-direction: column; }
.axis svg { margin-bottom: 2px; overflow: visible; }
.axis span { line-height: 15px; padding-left: 2px; }
.scale { font-size: 12px; text-anchor: end; }
.bar-col { width: 32px; display: flex; flex-direction: column; }
.bar-col h3 { height: 15px; font-size: 11px; font-weight: 400; line-height: 13px; display: flex; justify-content: center; }
.bar { position: relative; height: 161px; margin-bottom: 4px; border: 1px solid #888; border-width: 1px 0 0 1px; background: #ccc; display: flex; gap: 1px; padding-left: 1px; }
.bar.zero { background: linear-gradient(#888, #888) 0 80px / 30px 1px no-repeat #ccc; }
.bar.zero-low { background: linear-gradient(#888, #888) 0 130px / 32px 1px no-repeat #ccc; }
.setpoint { width: 4px; background: #0054b4; }
.fill { width: 23px; background: #666; border-top: 7px solid #48d82a; }
.bar-col b { font-size: 12px; line-height: 15px; padding-right: 4px; text-align: right; }
.bar + b { color: #0054b4; }

/* alarm line */
.alarm { display: flex; height: 31px; border-top: 1px solid #000; background: #eee; }
.ack { width: 60px; background: linear-gradient(#eee, #ccc); border-right: 1px solid #555; }
.alarm-line { flex: 1; display: grid; grid-template-columns: 108px 115px 58px 1fr 131px 131px 130px 182px; margin: 2px 1px 4px 0; background: #f00; color: #fff; font-size: 19px; line-height: 24px; outline: 1px solid #888; white-space: nowrap; overflow: hidden; }
.alarm-line span { padding-left: 4px; border-left: 1px solid #ff6a6a; overflow: hidden; }

/* bottom bar */
.tabs { display: flex; height: 39px; border-top: 1px solid #000; border-bottom: 1px solid #000; background: linear-gradient(#606060, #333); color: #fff; font-size: 16px; }
.areas, .pages, .tools { display: flex; }
.areas button { width: 74px; background: linear-gradient(#727272, #4a4a4a); border-right: 1px solid #1a1a1a; box-shadow: inset 1px 1px #888; }
.pages button { width: 128px; line-height: 18px; border-right: 1px solid #111; box-shadow: inset 1px 0 #666; padding: 0 20px; white-space: nowrap; }
.pages button:first-child { width: 131px; white-space: normal; }
.pages .active { background: linear-gradient(#333, #6e6e6e); border-bottom: 2px solid #ccc; border-top: 2px solid #111; }
.tools { margin-left: auto; }
.tools button { width: 59px; border-left: 1px solid #111; box-shadow: inset 1px 0 #666; gap: 3px; }
.caret-up::after { content: ""; border: 3px solid transparent; border-bottom: 4px solid #fff; border-top: 0; }

/* floating window */
.dialog { position: absolute; z-index: 5; top: 66px; right: 70px; width: 393px; height: 356px; background: #f0f0f0; border: 1px solid #bbb; box-shadow: 2px 4px 10px rgba(0, 0, 0, .45); font-size: 11px; line-height: 14px; }
.titlebar { display: flex; align-items: center; height: 29px; padding-left: 10px; background: #fff; color: #999; font: 12px "Open Sans", sans-serif; }
.titlebar span { flex: 1; padding-left: 7px; }
.titlebar button { width: 45px; height: 29px; }
.titlebar .close { background: #f6a0a8; }
.dialog-body { padding: 12px 12px 0 12px; display: flex; flex-direction: column; gap: 7px; }
.dialog-top { display: flex; gap: 7px; height: 22px; }
.dialog-top button { width: 74px; border: 1px solid #adadad; background: #e1e1e1; }
.dialog-top .time { width: 54px; border: 1px solid #0078d7; background: #e5f1fb; margin-left: 1px; }
.dialog input[type="text"] { width: 144px; height: 21px; padding: 0 3px; border: 1px solid #7a7a7a; background: #fff; font: inherit; }
.dialog input.short { width: 75px; padding: 0 2px; }
.tree { height: 221px; padding: 2px 9px; border: 1px solid #828790; background: #fff; }
.tree label { display: flex; align-items: center; height: 16px; }
.tree i { position: relative; width: 9px; height: 9px; margin-right: 5px; border: 1px solid #999; background: linear-gradient(#3355a0, #3355a0) center / 5px 1px no-repeat, linear-gradient(#3355a0, #3355a0) center / 1px 5px no-repeat, #f4f4f4; }
.tree i::after { content: ""; position: absolute; left: 8px; top: 3px; width: 5px; border-top: 1px dotted #888; }
.dialog input[type="checkbox"] { appearance: none; width: 13px; height: 13px; margin-right: 2px; border: 1px solid #333; background: #fff; display: grid; place-items: center; }
.dialog input:checked::after { content: ""; width: 4px; height: 8px; margin-top: -2px; border: solid #222; border-width: 0 1px 1px 0; transform: rotate(40deg); }
.dialog-bottom { display: flex; gap: 4px; }
.dialog-bottom textarea { width: 301px; height: 43px; border: 1px solid #828790; background: #fff; resize: none; }
.options { display: flex; flex-direction: column; justify-content: space-between; height: 40px; }
.options label { display: flex; align-items: center; gap: 2px; }
```
